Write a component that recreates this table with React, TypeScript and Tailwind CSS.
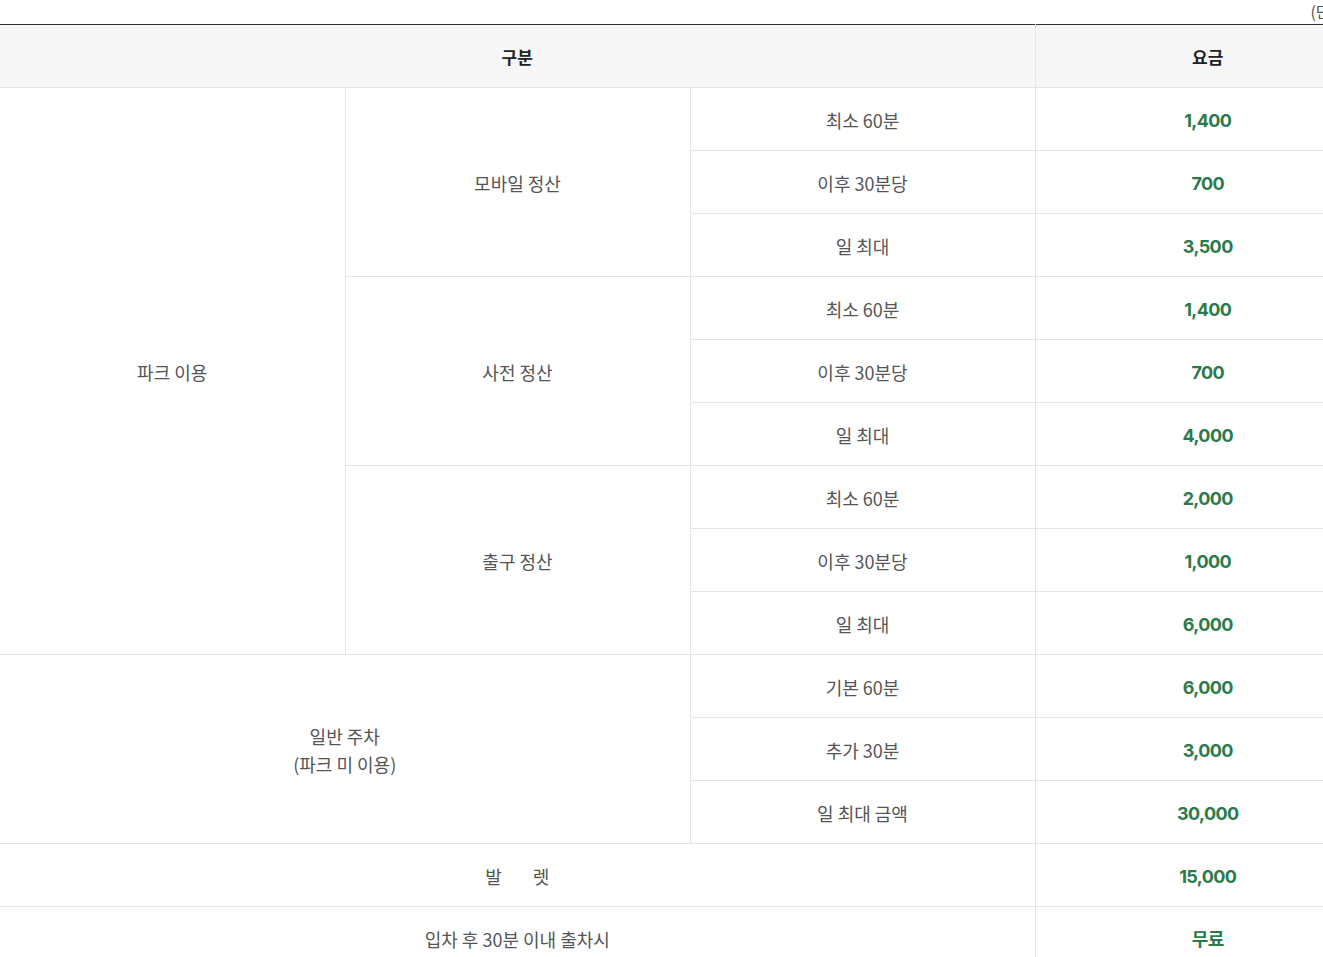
import React from 'react'

const groups = [
  {
    name: '모바일 정산',
    rows: [
      ['최소 60분', '1,400'],
      ['이후 30분당', '700'],
      ['일 최대', '3,500'],
    ],
  },
  {
    name: '사전 정산',
    rows: [
      ['최소 60분', '1,400'],
      ['이후 30분당', '700'],
      ['일 최대', '4,000'],
    ],
  },
  {
    name: '출구 정산',
    rows: [
      ['최소 60분', '2,000'],
      ['이후 30분당', '1,000'],
      ['일 최대', '6,000'],
    ],
  },
]

const general = [
  ['기본 60분', '6,000'],
  ['추가 30분', '3,000'],
  ['일 최대 금액', '30,000'],
]

const cell = 'h-[63px] pt-[2px] border-b border-r border-[#e5e5e5] text-center align-middle text-[18px] text-[#555]'
const price = 'h-[63px] pt-[2px] border-b border-[#e5e5e5] text-center align-middle text-[18px] font-bold text-[#2b7a4b] font-["Inter","Noto_Sans_CJK_KR",sans-serif] tracking-[-0.6px]'

export default function App() {
  return (
    <div className="w-[1380px] bg-white font-['Noto_Sans_CJK_KR','Noto_Sans',sans-serif]">
      <div className="h-[24px] text-right text-[16px] leading-[22px] text-[#555] pr-[3px]">(단위 : 원)</div>
      <table className="w-full border-collapse table-fixed border-t border-[#333]">
        <colgroup>
          <col className="w-[345px]" />
          <col className="w-[345px]" />
          <col className="w-[345px]" />
          <col />
        </colgroup>
        <thead>
          <tr className="bg-[#f7f7f7]">
            <th colSpan={3} className="h-[63px] pt-[2px] border-b border-r border-[#e5e5e5] text-[17px] font-bold text-[#222]">구분</th>
            <th className="h-[63px] pt-[2px] border-b border-[#e5e5e5] text-[17px] font-bold text-[#222]">요금</th>
          </tr>
        </thead>
        <tbody>
          {groups.map((g, gi) =>
            g.rows.map((r, ri) => (
              <tr key={`${gi}-${ri}`}>
                {gi === 0 && ri === 0 && (
                  <td rowSpan={9} className={cell}>파크 이용</td>
                )}
                {ri === 0 && (
                  <td rowSpan={3} className={cell}>{g.name}</td>
                )}
                <td className={cell}>{r[0]}</td>
                <td className={price}>{r[1]}</td>
              </tr>
            ))
          )}
          {general.map((r, ri) => (
            <tr key={`g-${ri}`}>
              {ri === 0 && (
                <td rowSpan={3} colSpan={2} className={cell + ' leading-[28px]'}>
                  일반 주차
                  <br />
                  (파크 미 이용)
                </td>
              )}
              <td className={cell}>{r[0]}</td>
              <td className={price}>{r[1]}</td>
            </tr>
          ))}
          <tr>
            <td colSpan={3} className={cell}>
              발<span className="inline-block w-[31px]" />렛
            </td>
            <td className={price}>15,000</td>
          </tr>
          <tr>
            <td colSpan={3} className={cell}>입차 후 30분 이내 출차시</td>
            <td className={price}>무료</td>
          </tr>
        </tbody>
      </table>
    </div>
  )
}
